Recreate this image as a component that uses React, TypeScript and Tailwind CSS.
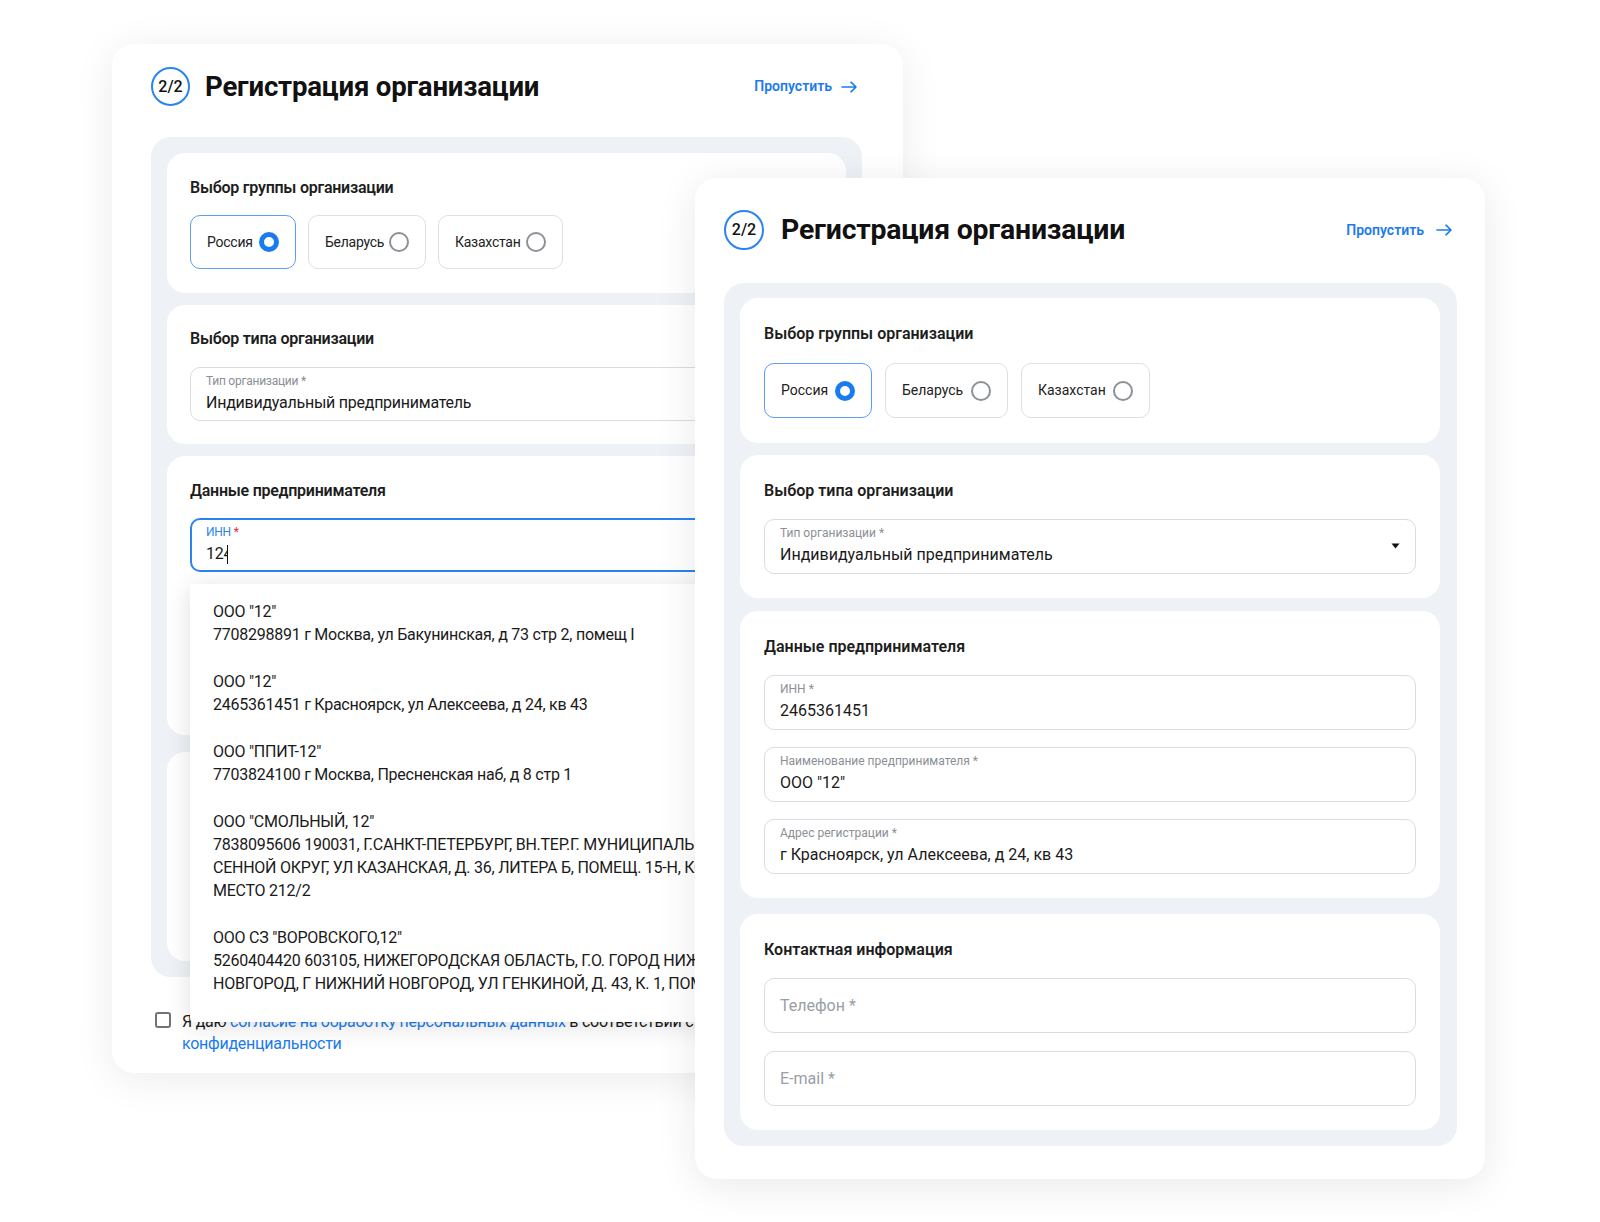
import React from "react";

const Arrow = () => (
  <svg width="16" height="12" viewBox="0 0 16 12" fill="none" stroke="currentColor" strokeWidth="1.6" strokeLinecap="round" strokeLinejoin="round">
    <path d="M1 6h14M10 1.2l5 4.8-5 4.8" />
  </svg>
);

function Header({ big }: { big?: boolean }) {
  return (
    <div className={`flex items-center justify-between pr-[5px] ${big ? "h-10" : "h-[39px]"}`}>
      <div className={`flex items-center ${big ? "gap-[17px]" : "gap-[15px]"}`}>
        <div
          className={`rounded-full border-2 border-[#2a84f0] flex items-center justify-center text-[16px] font-medium text-[#111] tracking-normal ${
            big ? "w-10 h-10" : "w-[39px] h-[39px]"
          }`}
        >
          2/2
        </div>
        <h1
          className={`leading-8 font-bold text-[#111] ${
            big ? "text-[28.4px] tracking-[-0.2px]" : "text-[27.6px] tracking-[-0.2px]"
          }`}
        >
          Регистрация организации
        </h1>
      </div>
      <div
        className={`flex items-center text-[#1a7bf0] text-[14px] font-semibold tracking-normal ${
          big ? "gap-3" : "gap-[9px]"
        }`}
      >
        Пропустить
        <Arrow />
      </div>
    </div>
  );
}

function Radio({ label, checked, w }: { label: string; checked?: boolean; w: string }) {
  return (
    <div
      className={`${w} h-full flex items-center justify-between px-4 rounded-[10px] border ${
        checked ? "border-[#5c9ef5]" : "border-[#dcdfe4]"
      }`}
    >
      <span className="text-[14px] text-[#222]">{label}</span>
      {checked ? (
        <span className="w-5 h-5 shrink-0 rounded-full border-[5.5px] border-[#1a7bf0] bg-white" />
      ) : (
        <span className="w-5 h-5 shrink-0 rounded-full border-2 border-[#8c9097]" />
      )}
    </div>
  );
}

function Field({ label, value, h }: { label: string; value: string; h: string }) {
  return (
    <div className={`${h} rounded-[10px] border border-[#d9dce1] px-[15px] flex flex-col`}>
      <span className="mt-[5px] text-[12px] leading-4 text-[#8b8f96]">{label}</span>
      <span className="mt-[2px] text-[16px] leading-6 text-[#1a1a1a]">{value}</span>
    </div>
  );
}

function Placeholder({ text }: { text: string }) {
  return (
    <div className="h-[55px] rounded-[10px] border border-[#d9dce1] px-[15px] flex items-center text-[16px] text-[#9a9ea5]">
      {text}
    </div>
  );
}

const sectionTitle = "text-[16px] leading-5 font-semibold text-[#1d1d1d]";

const suggestions: string[][] = [
  ['ООО "12"', "7708298891 г Москва, ул Бакунинская, д 73 стр 2, помещ I"],
  ['ООО "12"', "2465361451 г Красноярск, ул Алексеева, д 24, кв 43"],
  ['ООО "ППИТ-12"', "7703824100 г Москва, Пресненская наб, д 8 стр 1"],
  [
    'ООО "СМОЛЬНЫЙ, 12"',
    "7838095606 190031, Г.САНКТ-ПЕТЕРБУРГ, ВН.ТЕР.Г. МУНИЦИПАЛЬНЫЙ ОКРУГ",
    "СЕННОЙ ОКРУГ, УЛ КАЗАНСКАЯ, Д. 36, ЛИТЕРА Б, ПОМЕЩ. 15-Н, КОМ. 2, РАБОЧЕЕ",
    "МЕСТО 212/2",
  ],
  [
    'ООО СЗ "ВОРОВСКОГО,12"',
    "5260404420 603105, НИЖЕГОРОДСКАЯ ОБЛАСТЬ, Г.О. ГОРОД НИЖНИЙ",
    "НОВГОРОД, Г НИЖНИЙ НОВГОРОД, УЛ ГЕНКИНОЙ, Д. 43, К. 1, ПОМЕЩ. 2",
  ],
];

function LeftCard() {
  return (
    <div className="absolute left-[112px] top-[44px] w-[791px] h-[1029px] bg-white rounded-[22px] shadow-[0_6px_40px_rgba(0,0,0,0.08)] pl-[39px] pr-[41px] pt-[23px] tracking-[-0.25px]">
      <Header />
      <div className="mt-[31px] bg-[#eef1f5] rounded-[20px] p-4 flex flex-col">
        <div className="bg-white rounded-[18px] px-[23px] pt-[25px] pb-[24px]">
          <div className={sectionTitle}>Выбор группы организации</div>
          <div className="mt-[17px] h-[54px] flex gap-[12px]">
            <Radio label="Россия" checked w="w-[106px]" />
            <Radio label="Беларусь" w="w-[118px]" />
            <Radio label="Казахстан" w="w-[125px]" />
          </div>
        </div>
        <div className="mt-3 bg-white rounded-[18px] px-[23px] pt-[24px] pb-[23px]">
          <div className={sectionTitle}>Выбор типа организации</div>
          <div className="mt-[18px]">
            <Field label="Тип организации *" value="Индивидуальный предприниматель" h="h-[54px]" />
          </div>
        </div>
        <div className="mt-3 h-[279px] bg-white rounded-[18px] px-[23px] pt-[25px]">
          <div className={sectionTitle}>Данные предпринимателя</div>
          <div className="mt-[17px] h-[54px] rounded-[10px] border-2 border-[#2a84f0] px-[14px] flex flex-col">
            <span className="mt-[4px] text-[12px] leading-4 text-[#2a84f0]">
              ИНН <span className="text-[#e5293e]">*</span>
            </span>
            <span className="mt-[2px] text-[16px] leading-6 text-[#1a1a1a] flex items-center">
              12
              <span className="inline-block w-[4px] h-6 overflow-hidden">4</span>
              <span className="inline-block w-px h-[19px] bg-[#111]" />
            </span>
          </div>
        </div>
        <div className="mt-[17px] h-[209px] bg-white rounded-[18px]" />
      </div>
      <div className="mt-[34px] flex items-start gap-[11px] pl-1">
        <span className="mt-[1px] w-4 h-4 shrink-0 rounded-[3px] border-2 border-[#6f737a] bg-white" />
        <div className="text-[16px] leading-[22px] text-[#1a1a1a]">
          <div className="whitespace-nowrap">
            Я даю <span className="text-[#1a7bf0]">согласие на обработку персональных данных</span> в соответствии с{" "}
            <span className="text-[#1a7bf0]">Политикой</span>
          </div>
          <div className="text-[#1a7bf0]">конфиденциальности</div>
        </div>
      </div>
      {/* suggestions menu */}
      <div className="absolute left-[78px] top-[540px] w-[632px] h-[438px] bg-white rounded-[4px] shadow-[0_4px_24px_rgba(0,0,0,0.13)] pt-1 overflow-hidden">
        {suggestions.map((s, i) => (
          <div key={i} className="px-[23px] py-3 text-[16px] leading-[23px] text-[#1a1a1a]">
            {s.map((line, j) => (
              <div key={j} className="whitespace-nowrap">
                {line}
              </div>
            ))}
          </div>
        ))}
      </div>
    </div>
  );
}

function RightCard() {
  return (
    <div className="absolute left-[695px] top-[178px] w-[790px] h-[1001px] bg-white rounded-[22px] shadow-[0_6px_40px_rgba(0,0,0,0.09)] pl-[29px] pr-[28px] pt-[32px]">
      <Header big />
      <div className="mt-[33px] bg-[#eef1f5] rounded-[20px] pt-[15px] pb-4 pl-4 pr-[17px] flex flex-col">
        <div className="bg-white rounded-[18px] px-6 pt-[26px] pb-[25px]">
          <div className={sectionTitle}>Выбор группы организации</div>
          <div className="mt-[19px] h-[55px] flex gap-[13px]">
            <Radio label="Россия" checked w="w-[108px]" />
            <Radio label="Беларусь" w="w-[123px]" />
            <Radio label="Казахстан" w="w-[129px]" />
          </div>
        </div>
        <div className="mt-3 bg-white rounded-[18px] px-6 pt-[26px] pb-6">
          <div className={sectionTitle}>Выбор типа организации</div>
          <div className="mt-[18px] relative">
            <Field label="Тип организации *" value="Индивидуальный предприниматель" h="h-[55px]" />
            <svg className="absolute right-[16px] top-[24px]" width="9" height="6" viewBox="0 0 9 6">
              <path d="M0.5 0.5h8L4.5 5.5z" fill="#111" />
            </svg>
          </div>
        </div>
        <div className="mt-[13px] bg-white rounded-[18px] px-6 pt-[26px] pb-6">
          <div className={sectionTitle}>Данные предпринимателя</div>
          <div className="mt-[18px] flex flex-col gap-[17px]">
            <Field label="ИНН *" value="2465361451" h="h-[55px]" />
            <Field label="Наименование предпринимателя *" value={'ООО "12"'} h="h-[55px]" />
            <Field label="Адрес регистрации *" value="г Красноярск, ул Алексеева, д 24, кв 43" h="h-[55px]" />
          </div>
        </div>
        <div className="mt-4 bg-white rounded-[18px] px-6 pt-[26px] pb-6">
          <div className={sectionTitle}>Контактная информация</div>
          <div className="mt-[18px] flex flex-col gap-[18px]">
            <Placeholder text="Телефон *" />
            <Placeholder text="E-mail *" />
          </div>
        </div>
      </div>
    </div>
  );
}

export default function App() {
  return (
    <div className="relative w-[1600px] h-[1222px] bg-white overflow-hidden font-[Roboto,sans-serif]">
      <LeftCard />
      <RightCard />
    </div>
  );
}
